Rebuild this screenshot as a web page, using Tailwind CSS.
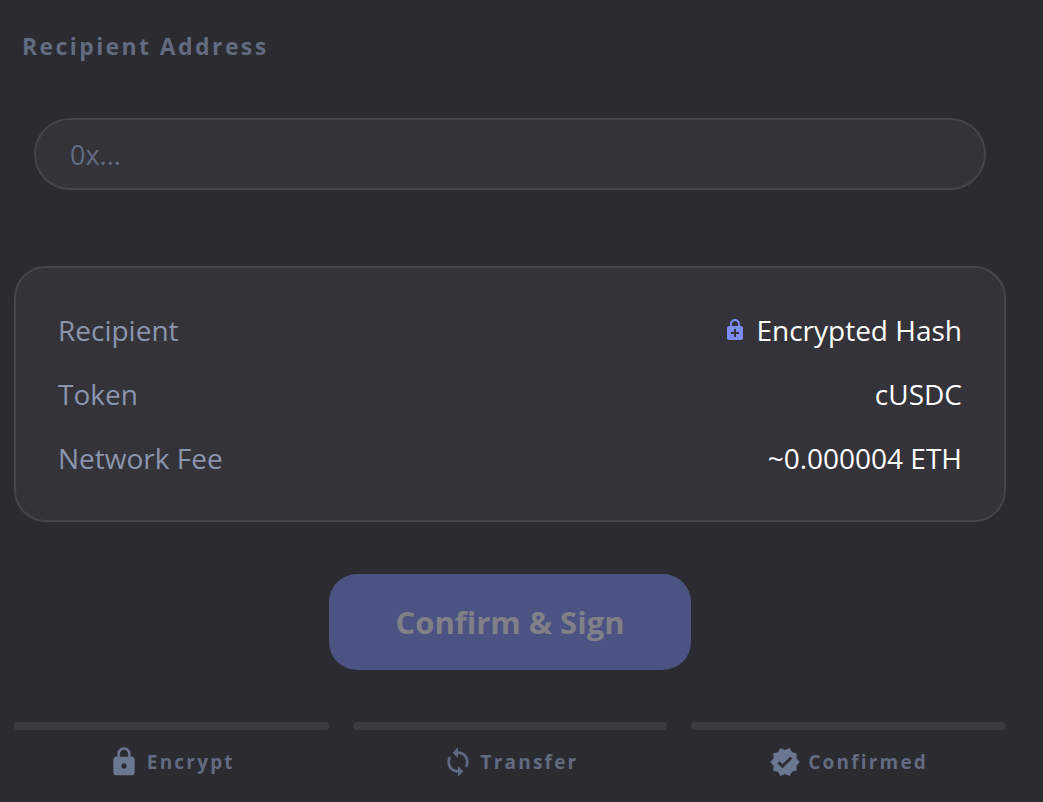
<!DOCTYPE html>
<html lang="en">

<head>
    <meta charset="UTF-8" />
    <meta name="viewport" content="width=device-width, initial-scale=1.0" />
    <title>Confirm Transfer</title>
    <script src="https://cdn.jsdelivr.net/npm/@tailwindcss/browser@4"></script>
</head>

<body class="bg-[#2b2c31] h-[802px] overflow-hidden font-['Open_Sans',sans-serif]">
    <div class="w-[992px] ml-[14px]">
        <!-- Recipient -->
        <label class="block pt-[32px] pl-2 h-[118px] text-[23px] leading-[28px] font-bold tracking-[2.4px] text-[#626b80]">Recipient Address</label>
        <div class="mx-5 h-[72px] flex items-center pt-[2px] px-[34px] rounded-full bg-[#34333a] border-2 border-[#45454c] text-[27px] text-[#626b80]">0x...</div>

        <!-- Summary -->
        <div class="mt-[76px] h-[256px] px-[42px] flex flex-col justify-center gap-6 rounded-[32px] bg-[#34333a] border-2 border-[#45454c] text-[28px] leading-[40px]">
            <div class="flex justify-between">
                <span class="text-[#8b95ac]">Recipient</span>
                <span class="flex items-center gap-[9px] text-white">
                    <svg class="w-6 h-6 fill-[#7c8cf8]" viewBox="0 0 24 24"><path d="M18 8h-1V6c0-2.76-2.24-5-5-5S7 3.24 7 6v2H6c-1.1 0-2 .9-2 2v10c0 1.1.9 2 2 2h12c1.1 0 2-.9 2-2V10c0-1.1-.9-2-2-2zM8.9 6c0-1.71 1.39-3.1 3.1-3.1s3.1 1.39 3.1 3.1v2H8.9V6zM16 16h-3v3h-2v-3H8v-2h3v-3h2v3h3v2z" /></svg>
                    Encrypted Hash
                </span>
            </div>
            <div class="flex justify-between">
                <span class="text-[#8b95ac]">Token</span>
                <span class="text-white">cUSDC</span>
            </div>
            <div class="flex justify-between">
                <span class="text-[#8b95ac]">Network Fee</span>
                <span class="text-white">~0.000004 ETH</span>
            </div>
        </div>

        <!-- Action -->
        <div class="flex justify-center mt-[52px]">
            <button class="w-[362px] h-24 rounded-[28px] bg-[#4c5382] text-[31px] font-bold text-[#7f8088]">Confirm &amp; Sign</button>
        </div>

        <!-- Steps -->
        <div class="grid grid-cols-3 gap-6 mt-[52px]">
            <div>
                <div class="h-2 rounded-full bg-[#3b3c42]"></div>
                <div class="flex items-center justify-center gap-[7px] mt-4 h-8 text-[19px] font-bold tracking-[2.2px] text-[#626b80]">
                    <svg class="w-8 h-8 fill-[#6b7690]" viewBox="0 0 24 24"><path d="M18 8h-1V6c0-2.76-2.24-5-5-5S7 3.24 7 6v2H6c-1.1 0-2 .9-2 2v10c0 1.1.9 2 2 2h12c1.1 0 2-.9 2-2V10c0-1.1-.9-2-2-2zm-6 9c-1.1 0-2-.9-2-2s.9-2 2-2 2 .9 2 2-.9 2-2 2zm3.1-9H8.9V6c0-1.71 1.39-3.1 3.1-3.1 1.71 0 3.1 1.39 3.1 3.1v2z" /></svg>
                    Encrypt
                </div>
            </div>
            <div>
                <div class="h-2 rounded-full bg-[#3b3c42]"></div>
                <div class="flex items-center justify-center gap-[7px] mt-4 h-8 text-[19px] font-bold tracking-[2.2px] text-[#626b80]">
                    <svg class="w-8 h-8 fill-[#5f6a82]" viewBox="0 0 24 24"><path d="M12 4V1L8 5l4 4V6c3.31 0 6 2.69 6 6 0 1.01-.25 1.97-.7 2.8l1.46 1.46C19.54 15.03 20 13.57 20 12c0-4.42-3.58-8-8-8zm0 14c-3.31 0-6-2.69-6-6 0-1.01.25-1.97.7-2.8L5.24 7.74C4.46 8.97 4 10.43 4 12c0 4.42 3.58 8 8 8v3l4-4-4-4v3z" /></svg>
                    Transfer
                </div>
            </div>
            <div>
                <div class="h-2 rounded-full bg-[#3b3c42]"></div>
                <div class="flex items-center justify-center gap-[7px] mt-4 h-8 text-[19px] font-bold tracking-[2.2px] text-[#626b80]">
                    <svg class="w-8 h-8 fill-[#6b7690]" viewBox="0 0 24 24"><path d="M23 12l-2.44-2.78.34-3.68-3.61-.82-1.89-3.18L12 3 8.6 1.54 6.71 4.72l-3.61.81.34 3.68L1 12l2.44 2.78-.34 3.69 3.61.82 1.89 3.18L12 21l3.4 1.46 1.89-3.18 3.61-.82-.34-3.68L23 12zm-12.91 4.72l-3.8-3.81 1.48-1.48 2.32 2.33 5.85-5.87 1.48 1.48-7.33 7.35z" /></svg>
                    Confirmed
                </div>
            </div>
        </div>
    </div>
</body>

</html>
